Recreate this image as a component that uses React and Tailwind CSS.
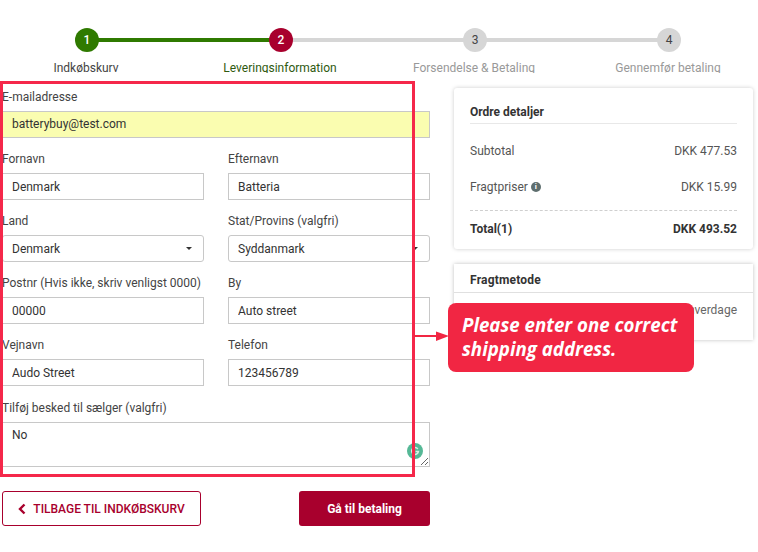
import React from "react";

const font = { fontFamily: "Roboto, sans-serif" };

function Step({ n, label, state }) {
  const circle =
    state === "done"
      ? "bg-[#2f7a00] text-white font-medium"
      : state === "active"
        ? "bg-[#a8002d] text-white font-medium"
        : "bg-[#d6d6d6] text-[#444]";
  const text =
    state === "done"
      ? "text-[#444]"
      : state === "active"
        ? "text-[#2f5a10]"
        : "text-[#999]";
  const bar1 = state === "done" || state === "active" ? "bg-[#2f7a00]" : "bg-[#d6d6d6]";
  const bar2 = state === "done" ? "bg-[#2f7a00]" : "bg-[#d6d6d6]";
  return (
    <div className="flex flex-col items-center w-[194px] shrink-0">
      <div className="relative w-full h-6 flex justify-center">
        {n !== 1 && <div className={`absolute left-0 top-[10px] w-1/2 h-1 ${bar1}`} />}
        {n !== 4 && <div className={`absolute right-0 top-[10px] w-1/2 h-1 ${bar2}`} />}
        <div className={`relative w-6 h-6 rounded-full flex items-center justify-center text-xs ${circle}`}>{n}</div>
      </div>
      <div className={`mt-[10px] mr-[2px] h-[11px] overflow-hidden text-xs leading-[13px] whitespace-nowrap ${text}`}>{label}</div>
    </div>
  );
}

function Field({ label, value, yellow }) {
  return (
    <div className="flex flex-col">
      <label className="h-[21px] text-xs leading-[14px] text-[#444] whitespace-nowrap">{label}</label>
      <input
        readOnly
        value={value}
        style={font}
        className={`h-[27px] w-full border border-[#c8c8c8] px-[9px] text-xs text-[#333] outline-none ${yellow ? "bg-[#fafdb0] pb-[2px]" : "bg-white"}`}
      />
    </div>
  );
}

function SelectField({ label, value }) {
  return (
    <div className="flex flex-col">
      <label className="h-[21px] text-xs leading-[14px] text-[#444] whitespace-nowrap">{label}</label>
      <div className="h-[27px] border border-[#c8c8c8] rounded-[3px] bg-white pl-[9px] pr-[11px] flex items-center justify-between text-xs text-[#333]">
        <span>{value}</span>
        <span className="w-0 h-0 border-x-[3px] border-x-transparent border-t-[3px] border-t-[#333]" />
      </div>
    </div>
  );
}

function Row({ left, right, bold }) {
  return (
    <div className={`flex items-center justify-between text-xs ${bold ? "font-bold text-[#333]" : "text-[#555]"}`}>
      <div className="flex items-center gap-[3px]">{left}</div>
      <div>{right}</div>
    </div>
  );
}

export default function App() {
  return (
    <div style={font} className="relative w-[758px] h-[552px] overflow-hidden bg-white">
      <div className="flex ml-[-10px] pt-[28px] h-[81px]">
        <Step n={1} label="Indkøbskurv" state="done" />
        <Step n={2} label="Leveringsinformation" state="active" />
        <Step n={3} label="Forsendelse & Betaling" state="todo" />
        <Step n={4} label="Gennemfør betaling" state="todo" />
      </div>

      <div className="flex pl-[2px] pr-[4px]">
        <div className="w-[428px] shrink-0 pt-[9px]">
          <div className="flex flex-col gap-[14px]">
            <Field label="E-mailadresse" value="batterybuy@test.com" yellow />
            <div className="grid grid-cols-2 gap-x-6 gap-y-[14px]">
              <Field label="Fornavn" value="Denmark" />
              <Field label="Efternavn" value="Batteria" />
              <SelectField label="Land" value="Denmark" />
              <SelectField label="Stat/Provins (valgfri)" value="Syddanmark" />
              <Field label="Postnr (Hvis ikke, skriv venligst 0000)" value="00000" />
              <Field label="By" value="Auto street" />
              <Field label="Vejnavn" value="Audo Street" />
              <Field label="Telefon" value="123456789" />
            </div>
            <div className="relative flex flex-col pt-px">
              <label className="h-[21px] text-xs leading-[14px] text-[#444]">Tilføj besked til sælger (valgfri)</label>
              <textarea
                readOnly
                value="No"
                style={font}
                className="block h-[45px] w-full border border-[#c8c8c8] px-[9px] py-[5px] text-xs leading-[14px] text-[#333] outline-none"
              />
              <div className="absolute right-[7px] bottom-[8px] w-4 h-4 rounded-full bg-[#55b896] flex items-center justify-center">
                <svg width="10" height="10" viewBox="0 0 10 10" fill="none" stroke="#d9f0e7" strokeWidth="1.5">
                  <path d="M7.8 3A3.4 3.4 0 1 0 8.4 5.6H5.6" />
                </svg>
              </div>
            </div>
          </div>
          <div className="flex justify-between mt-6">
            <button className="h-[35px] w-[199px] border border-[#a8002d] rounded-[3px] bg-white flex items-center justify-center gap-[7px] text-xs font-medium text-[#a8002d]">
              <svg width="8" height="12" viewBox="0 0 8 12" fill="none" stroke="#a8002d" strokeWidth="2.4">
                <path d="M6.5 1.5 2 6l4.5 4.5" />
              </svg>
              TILBAGE TIL INDKØBSKURV
            </button>
            <button className="h-[35px] w-[131px] rounded-[3px] bg-[#a8002d] text-xs font-bold text-white">Gå til betaling</button>
          </div>
        </div>

        <div className="ml-6 w-[299px] flex flex-col gap-[15px] pt-[7px]">
          <div className="h-[161px] rounded-[3px] bg-white shadow-[0_0_4px_rgba(0,0,0,0.2)] pl-4 pr-4">
            <div className="h-9 pt-[17px] leading-[15px] text-xs font-bold text-[#333] border-b border-[#e8e8e8]">Ordre detaljer</div>
            <div className="mt-[19px]">
              <Row left="Subtotal" right="DKK 477.53" />
            </div>
            <div className="mt-[20px]">
              <Row
                left={
                  <>
                    Fragtpriser
                    <span className="w-[10px] h-[10px] rounded-full bg-[#5e6e6e] text-white text-[8px] leading-[10px] font-bold text-center">i</span>
                  </>
                }
                right="DKK 15.99"
              />
            </div>
            <div className="mt-[15px] border-t border-dashed border-[#cfcfcf] pt-[10px]">
              <Row left="Total(1)" right="DKK 493.52" bold />
            </div>
          </div>

          <div className="h-[76px] bg-white shadow-[0_0_4px_rgba(0,0,0,0.25)]">
            <div className="h-[29px] px-4 pt-[3px] flex items-center text-xs font-bold tracking-[0.2px] text-[#333] border-b border-[#e0e0e0]">Fragtmetode</div>
            <div className="px-4 pt-[9px] flex justify-end text-xs text-[#666]">7-15 hverdage</div>
          </div>
        </div>
      </div>

      {/* annotation overlay */}
      <div className="absolute left-0 top-[81px] w-[415px] h-[396px] border-[3px] border-[#f5284a] pointer-events-none" />
      <svg className="absolute left-[414px] top-[330px]" width="36" height="14" viewBox="0 0 36 14">
        <path d="M0 6h24" stroke="#f12643" strokeWidth="2" fill="none" />
        <path d="M22 1.5l13 4.5-13 5z" fill="#f12643" />
      </svg>
      <div
        style={{ fontFamily: '"Open Sans", sans-serif' }}
        className="absolute left-[448px] top-[303px] w-[246px] h-[69px] rounded-lg bg-[#f12643] pl-[14px] pt-[10px] text-[18.7px] leading-[24px] font-bold italic text-white"
      >
        Please enter one correct
        <br />
        shipping address.
      </div>
    </div>
  );
}
